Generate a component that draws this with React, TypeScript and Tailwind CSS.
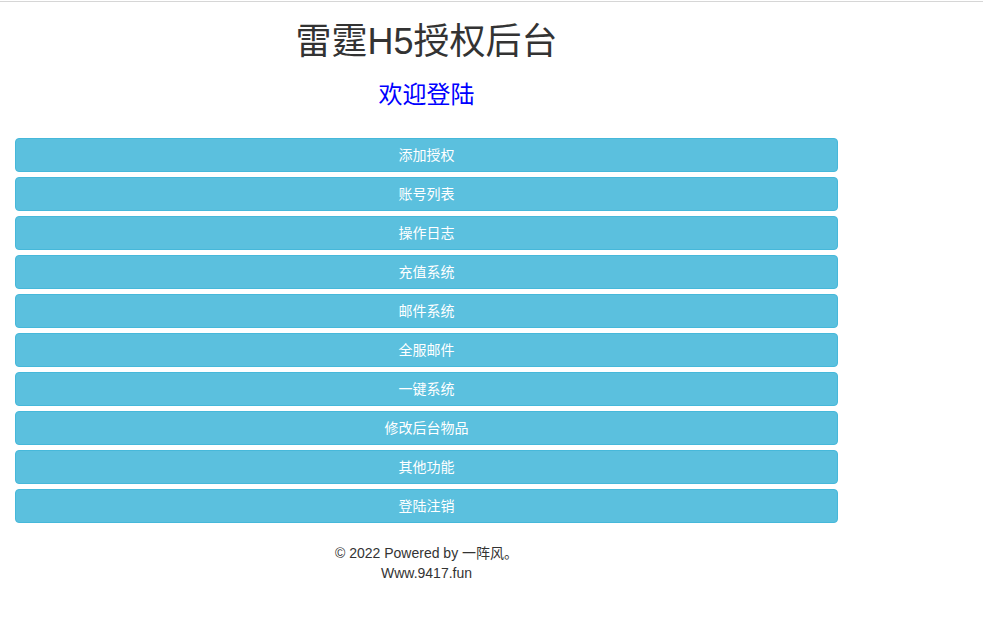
const menu = [
  "添加授权",
  "账号列表",
  "操作日志",
  "充值系统",
  "邮件系统",
  "全服邮件",
  "一键系统",
  "修改后台物品",
  "其他功能",
  "登陆注销",
];

const font = { fontFamily: '"Liberation Sans", "Noto Sans CJK SC", sans-serif' };

export default function App() {
  return (
    <div className="min-h-screen bg-white text-[#333] text-[14px]" style={font}>
      <div className="pt-px">
        <div className="h-px bg-[#d6d6d6]" />
      </div>
      <div className="w-[853px] px-[15px]">
        <h1 className="mt-[20px] text-center text-[36px] leading-[1.1] text-[#333]">雷霆H5授权后台</h1>
        <h3 className="mt-[20px] text-center text-[24px] leading-[1.1] text-[#0000ff]">欢迎登陆</h3>
        <div className="mt-[30px] flex flex-col gap-[5px]">
          {menu.map((m) => (
            <button
              key={m}
              className="h-[34px] w-full rounded-[4px] border border-[#46b8da] bg-[#5bc0de] text-[14px] leading-[20px] text-white"
            >
              {m}
            </button>
          ))}
        </div>
        <div className="mt-[20px] text-center leading-[20px] text-[#333]">
          <p>© 2022 Powered by 一阵风。</p>
          <p>Www.9417.fun</p>
        </div>
      </div>
    </div>
  );
}
